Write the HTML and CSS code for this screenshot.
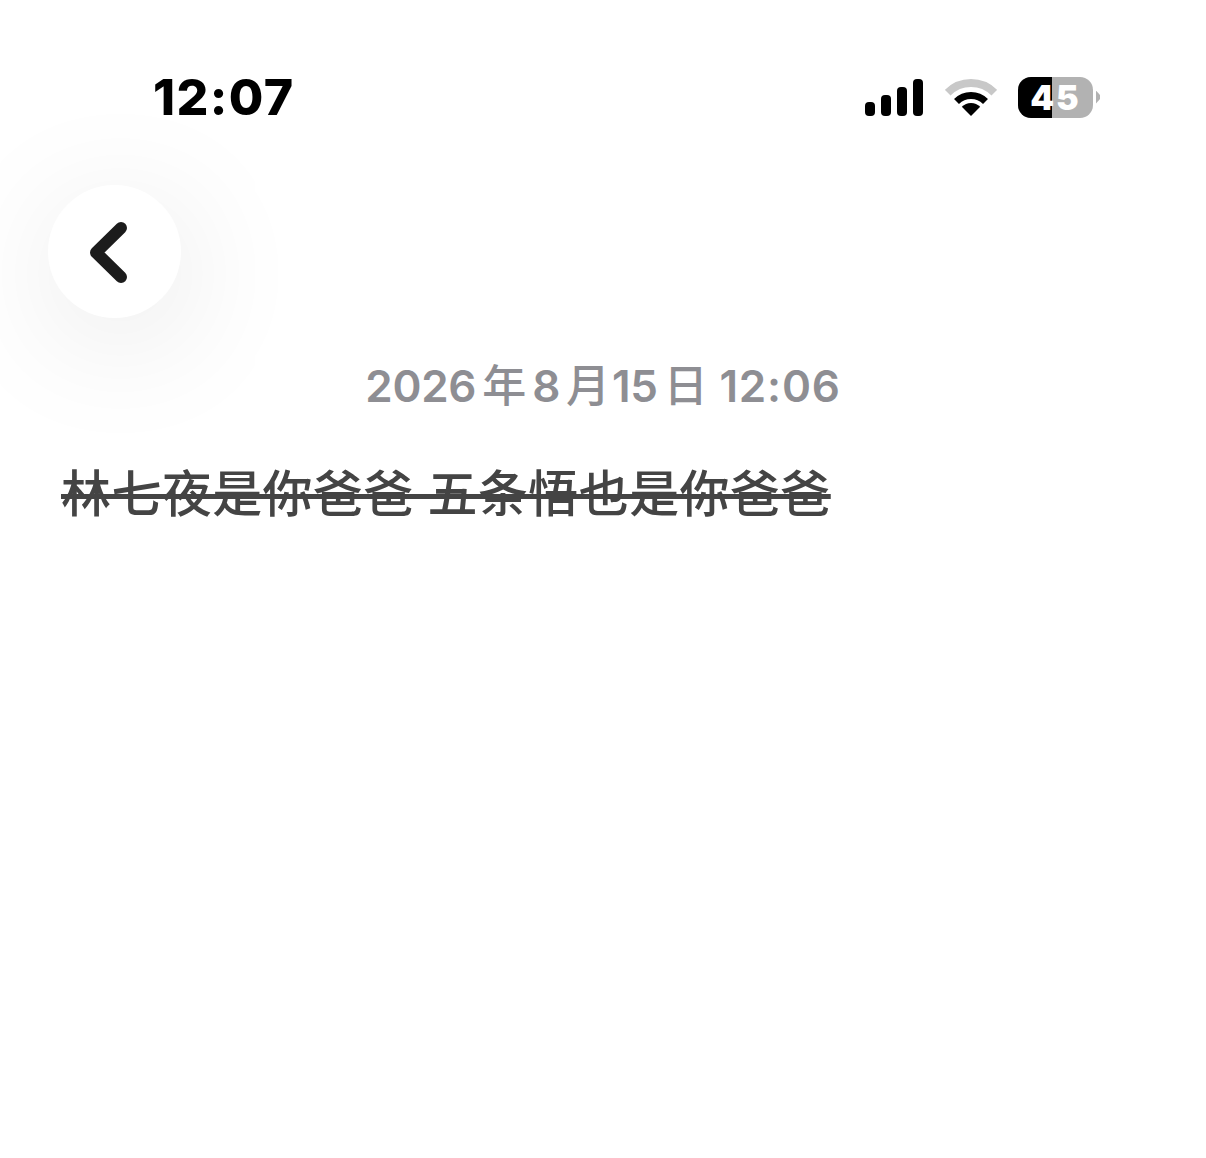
FILE: index.html
```html
<!DOCTYPE html>
<html lang="zh-CN">
<head>
<meta charset="utf-8">
<title>Note</title>
<link rel="stylesheet" href="styles.css">
</head>
<body>
<div class="page">
  <header class="status">
    <span class="time">12:07</span>
    <div class="indicators">
      <svg class="signal" width="58" height="38" viewBox="0 0 58 38">
        <rect x="0" y="24" width="10" height="14" rx="4"/>
        <rect x="16" y="17" width="10" height="21" rx="4"/>
        <rect x="32" y="9" width="10" height="29" rx="4"/>
        <rect x="48" y="1" width="10" height="37" rx="4"/>
      </svg>
      <svg class="wifi" width="52" height="38" viewBox="0 0 52 38">
        <path d="M2.7 14.7 A33 33 0 0 1 49.3 14.7" fill="none" stroke="#c8c8c8" stroke-width="8"/>
        <path d="M11.5 23.5 A20.5 20.5 0 0 1 40.5 23.5" fill="none" stroke="#000" stroke-width="7"/>
        <path d="M26 38 L16.8 28.8 A13 13 0 0 1 35.2 28.8 Z" fill="#000"/>
      </svg>
      <div class="battery">
        <div class="battery-body">
          <div class="battery-fill"></div>
          <span class="battery-num">45</span>
        </div>
        <span class="battery-cap"></span>
      </div>
    </div>
  </header>
  <button class="back" type="button" aria-label="返回">
    <svg width="37" height="61" viewBox="0 0 37 61">
      <path d="M31 6 L6 30.5 L31 55" fill="none" stroke="#1c1c1c" stroke-width="12" stroke-linecap="round" stroke-linejoin="round"/>
    </svg>
  </button>
  <p class="date"><span class="date-num">2026</span><span class="date-cjk">年</span><span class="date-num">8</span><span class="date-cjk date-tight">月</span><span class="date-num">15</span><span class="date-cjk">日</span> <span class="date-clock">12:06</span></p>
  <p class="note"><s>林七夜是你爸爸 五条悟也是你爸爸</s></p>
</div>
</body>
</html>
```
FILE: styles.css
```css
* { box-sizing: border-box; }
html, body { margin: 0; padding: 0; background: #fff; }
body { width: 1206px; height: 1158px; overflow: hidden; font-family: Inter, "Noto Sans CJK SC", sans-serif; }
.page { display: flex; flex-direction: column; align-items: flex-start; padding-top: 68px; }
.status { width: 100%; height: 58px; display: flex; align-items: center; justify-content: space-between; padding: 0 106px 0 153px; }
.time { font-size: 50px; line-height: 58px; font-weight: 800; color: #000; letter-spacing: 1.4px; }
.indicators { display: flex; align-items: center; gap: 21px; }
.signal { display: block; fill: #000; margin-right: 1px; }
.wifi { display: block; }
.battery { display: flex; align-items: center; gap: 3px; }
.battery-body { position: relative; width: 75px; height: 41px; border-radius: 13px; background: #b2b2b2; overflow: hidden; display: flex; align-items: center; justify-content: center; }
.battery-fill { position: absolute; left: 0; top: 0; bottom: 0; width: 34px; background: #000; }
.battery-num { position: relative; color: #fff; font-size: 34px; line-height: 41px; font-weight: 900; letter-spacing: 2px; }
.battery-cap { width: 4px; height: 13px; background: #b2b2b2; border-radius: 0 6px 6px 0; clip-path: polygon(0 0, 100% 35%, 100% 65%, 0 100%); }
.back { width: 133px; height: 133px; margin: 59px 0 0 48px; padding: 2px 12px 0 0; border: 0; border-radius: 50%; background: #fff; display: flex; align-items: center; justify-content: center; box-shadow: 6px 22px 130px rgba(0, 0, 0, 0.1); }
.back svg { display: block; }
.date { align-self: center; margin: 38px 0 0; font-size: 44px; line-height: 60px; font-weight: 500; color: #8e8e93; }
.date-num { font-weight: 600; letter-spacing: -0.3px; }
.date-cjk { margin: 0 6px; }
.date-tight { margin-right: 2px; }
.date-clock { margin-left: -6px; font-weight: 600; letter-spacing: 0.8px; }
.note { margin: 44px 0 0 61px; font-size: 50px; line-height: 68px; font-weight: 500; letter-spacing: 0.4px; color: #444; }
.note s { text-decoration-thickness: 5px; }
```
